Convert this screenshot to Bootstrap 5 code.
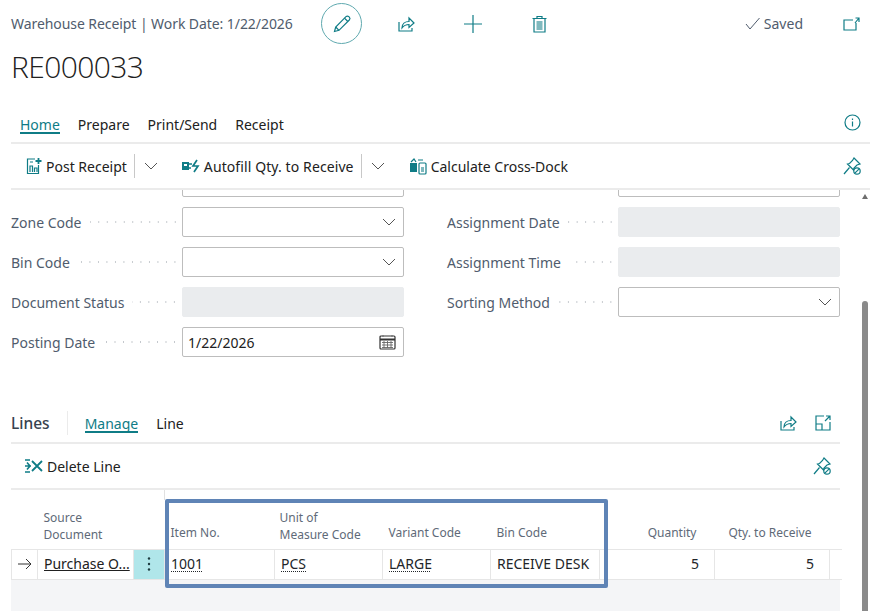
<!DOCTYPE html>
<html lang="en">
<head>
    <meta charset="UTF-8">
    <meta name="viewport" content="width=device-width, initial-scale=1.0">
    <title>Warehouse Receipt RE000033</title>
    <link href="https://cdn.jsdelivr.net/npm/bootstrap@5.3.0/dist/css/bootstrap.min.css" rel="stylesheet">
    <style>
        body { font-family: "Noto Sans", "Open Sans", sans-serif; font-size: 14px; color: #212121; background: #fff; height: 611px; overflow: hidden; }
        svg { display: block; flex: none; fill: none; stroke: #0f7c86; stroke-width: 1.2; }
        .bc-page { width: 870px; padding-left: 11px; }
        .bc-top { height: 47px; }
        .bc-crumb { font-size: 14px; letter-spacing: -0.07px; color: #505c6d; width: 310px; }
        .bc-circle { width: 41px; height: 41px; border: 1px solid #5fa9af; border-radius: 50%; }
        .bc-slot { width: 24px; margin-left: 42px; }
        .bc-slot-first { margin-left: 32px; }
        .bc-slot-plus { margin-left: 43px; }
        .bc-saved { color: #505c6d; }
        .bc-open { margin-left: 40px; margin-right: 10px; }
        .bc-title { font-family: "Open Sans", sans-serif; font-size: 30px; font-weight: 300; line-height: 40px; height: 64px; letter-spacing: -0.6px; color: #212121; }
        .bc-tabs { height: 33px; padding-left: 9px; padding-top: 7px; border-bottom: 2px solid #ebebeb; padding-right: 9px; }
        .bc-tab { margin-right: 18px; border-bottom: 2px solid transparent; line-height: 14px; }
        .bc-tab-on { color: #0f7c86; border-bottom-color: #0f7c86; }
        .bc-info { margin-top: -4px; }
        .bc-bar { height: 46px; border-bottom: 2px solid #ebebeb; padding-left: 15px; padding-right: 8px; }
        .bc-sep { width: 1px; height: 24px; background: #c8c8c8; margin-left: 7px; }
        .bc-chev { stroke: #555; stroke-width: 1; }
        .bc-split { margin-left: 9px; }
        .bc-next { margin-left: 23px; }
        .bc-wide { letter-spacing: 0.1px; }
        .bc-scroll { height: 421px; overflow: hidden; }
        .bc-main { width: 829px; }
        .bc-form { height: 211px; overflow: hidden; }
        .bc-fields { margin-top: -23px; }
        .bc-field { height: 30px; margin-bottom: 10px; }
        .bc-label { width: 171px; color: #505c6d; }
        .bc-dots { height: 4px; margin: 0 3px 0 8px; background-image: radial-gradient(circle, #c4c8cd 0.8px, transparent 1px); background-size: 8.5px 4px; background-position: right center; background-repeat: repeat-x; }
        .bc-input { width: 222px; height: 30px; border: 1px solid #bdbdbd; border-radius: 2px; padding: 0 7px 0 5px; background: #fff; }
        .bc-input-off { background: #eaecee; border-color: #eaecee; }
        .bc-gap { width: 43px; }
        .bc-linesbar { height: 43px; border-bottom: 2px solid #ebebeb; padding-top: 2px; padding-right: 8px; }
        .bc-linesname { font-size: 15.5px; font-weight: 500; line-height: 24px; color: #37424f; padding-right: 17px; border-right: 1px solid #ebebeb; margin-right: 17px; }
        .bc-linestab { margin-top: 4px; }
        .bc-subbar { height: 46px; border-bottom: 2px solid #ebebeb; padding-left: 13px; padding-right: 8px; }
        .bc-gridwrap { position: relative; }
        .bc-stick { width: 1px; height: 10px; background: #e1e1e1; margin-left: 153px; }
        .bc-grid { table-layout: fixed; width: 829px; margin: 0; --bs-table-bg: transparent; }
        .bc-grid th { height: 49px; padding: 0 6px 8px; font-size: 12px; line-height: 17px; font-weight: 400; color: #606a78; vertical-align: bottom; border-bottom: 1px solid #e6e6e6; }
        .bc-grid th.bc-two { padding-bottom: 6px; }
        .bc-grid td { height: 30px; padding: 0 6px; line-height: 28px; vertical-align: middle; border-right: 1px solid #e6e6e6; border-bottom: 1px solid #e6e6e6; white-space: nowrap; overflow: hidden; }
        .bc-grid td:first-child { border-left: 1px solid #e6e6e6; }
        .bc-c1 { width: 26px; }
        .bc-c2 { width: 96px; }
        .bc-c3 { width: 31px; }
        .bc-c4 { width: 110px; }
        .bc-grid th.bc-c5 { width: 108px; padding-left: 5px; }
        .bc-c6 { width: 108px; }
        .bc-c7 { width: 109px; }
        .bc-c8, .bc-c9 { width: 115px; }
        .bc-cend { width: 11px; }
        .bc-grid td.bc-menu { background: #b0e6ea; padding: 0; }
        .bc-grid th.bc-num { text-align: right; padding-right: 18px; }
        .bc-grid td.bc-num { text-align: right; padding-right: 15px; }
        .bc-grid td.bc-nob { border-right: 0; }
        .bc-link { color: #212121; text-decoration: underline; }
        .bc-dash { text-decoration: underline dotted 1px; text-underline-offset: 2px; }
        .bc-rest { height: 40px; background: #f4f5f7; }
        .bc-mark { position: absolute; left: 154px; top: 9px; width: 443px; height: 89px; border: 4px solid #5f84b6; border-radius: 2px; pointer-events: none; }
        .bc-track { width: 41px; padding-left: 22px; }
        .bc-arrow { width: 0; height: 0; border-left: 3.5px solid transparent; border-right: 3.5px solid transparent; border-bottom: 5px solid #6e6e6e; margin-top: 4px; }
        .bc-thumb { width: 6px; height: 320px; background: #8a8a8a; border-radius: 3px 3px 0 0; margin-top: 102px; }
    </style>
</head>
<body>
    <svg width="0" height="0" class="position-absolute">
        <symbol id="i-share" viewBox="0 0 20 20"><path d="M3 8v9h13v-3"/><path d="M6 14c0-4 3-6.500 7-6.500V4l5 5-5 4.500V10.500c-3 0-5 .8-7 3.500z"/></symbol>
        <symbol id="i-pin" viewBox="0 0 20 20"><path d="M12 2l6 6-3 1-3 3-.5 2L5.500 8l2-.5 3-3z"/><path d="M7.500 11.500L2 18"/><circle cx="15" cy="15" r="3.200"/><path d="M12.800 17.200l4.400-4.400"/></symbol>
        <symbol id="i-chev" viewBox="0 0 14 14"><path d="M1 4l6 6 6-6"/></symbol>
    </svg>

    <div class="bc-page">
        <div class="bc-top d-flex align-items-center">
            <div class="bc-crumb text-nowrap">Warehouse Receipt | Work Date: 1/22/2026</div>
            <div class="bc-circle d-flex align-items-center justify-content-center">
                <svg width="20" height="20" viewBox="0 0 20 20"><path d="M2.500 17.500l1.200-4.500L14 2.700c.8-.8 2-.8 2.800 0l.5.5c.8.8.8 2 0 2.800L7 16.300z"/><path d="M12.500 4.200l3.300 3.300M3.700 13l3.300 3.300"/></svg>
            </div>
            <div class="bc-slot bc-slot-first d-flex justify-content-center"><svg width="20" height="20"><use href="#i-share"/></svg></div>
            <div class="bc-slot bc-slot-plus d-flex justify-content-center"><svg width="18" height="18" viewBox="0 0 18 18"><path d="M9 0v18M0 9h18"/></svg></div>
            <div class="bc-slot d-flex justify-content-center"><svg width="15" height="18" viewBox="0 0 15 18"><path d="M.5 3.500h14M5 3.500V1.500h5v2M2 3.500v13.500h11V3.500z"/><rect x="4.500" y="6" width="6" height="9" fill="#7fb9be" stroke="none"/></svg></div>
            <div class="ms-auto d-flex align-items-center bc-saved">
                <svg width="15" height="13" viewBox="0 0 15 13" class="me-1"><path d="M1 7l4 5L14.500 1" stroke="#505c6d" stroke-width="1"/></svg>
                <span>Saved</span>
            </div>
            <div class="d-flex bc-open"><svg width="17" height="14" viewBox="0 0 17 14"><path d="M13 6v7H1V3h9"/><path d="M12 6l4-5M12.500 1H16v4"/></svg></div>
        </div>
        <div class="bc-title">RE000033</div>

        <div class="bc-tabs d-flex align-items-start">
            <span class="bc-tab bc-tab-on">Home</span>
            <span class="bc-tab">Prepare</span>
            <span class="bc-tab">Print/Send</span>
            <span class="bc-tab">Receipt</span>
            <svg width="17" height="17" viewBox="0 0 17 17" class="ms-auto bc-info"><circle cx="8.500" cy="8.500" r="7.500"/><path d="M8.500 7.500v5M8.500 4.500v1.400"/></svg>
        </div>

        <div class="bc-bar d-flex align-items-center">
            <svg width="16" height="18" viewBox="0 0 16 18" class="me-1"><path d="M9 2H1.500v14.500h11V8"/><path d="M12.500 1v6M9.500 4h6" stroke-width="1.800"/><path d="M4 15V9h2.500v6M8.500 15v-4H11v4M4 5h3"/></svg>
            <span>Post Receipt</span>
            <div class="bc-sep"></div>
            <svg width="14" height="14" class="bc-split bc-chev"><use href="#i-chev"/></svg>
            <svg width="19" height="14" viewBox="0 0 19 14" class="bc-next me-1"><rect x="1" y="3" width="7" height="8" fill="#0f7c86" stroke="none"/><rect x="3" y="5" width="3" height="2" fill="#fff" stroke="none"/><path d="M8 5h3M8 9h2" stroke-width="1.500"/><path d="M16 1l-4 6h5l-4 6" stroke-width="1.700"/></svg>
            <span class="bc-wide">Autofill Qty. to Receive</span>
            <div class="bc-sep"></div>
            <svg width="14" height="14" class="bc-split bc-chev"><use href="#i-chev"/></svg>
            <svg width="18" height="18" viewBox="0 0 18 18" class="ms-4 me-1"><rect x="1" y="6" width="7" height="9" fill="#0f7c86" stroke="none"/><path d="M2 5l3-3 2 3M9 3h5"/><rect x="10" y="6" width="7" height="11" rx="1"/><rect x="12" y="10" width="3" height="5" fill="#7fb9be" stroke="none"/></svg>
            <span>Calculate Cross-Dock</span>
            <svg width="20" height="20" class="ms-auto"><use href="#i-pin"/></svg>
        </div>

        <div class="bc-scroll d-flex">
            <div class="bc-main">
                <div class="bc-form">
                    <div class="bc-fields d-flex">
                        <div>
                            <div class="bc-field d-flex align-items-center">
                                <div class="bc-label d-flex align-items-center"></div>
                                <div class="bc-input"></div>
                            </div>
                            <div class="bc-field d-flex align-items-center">
                                <div class="bc-label d-flex align-items-center"><span>Zone Code</span><span class="bc-dots flex-grow-1"></span></div>
                                <div class="bc-input d-flex align-items-center justify-content-end"><svg width="14" height="14" class="bc-chev"><use href="#i-chev"/></svg></div>
                            </div>
                            <div class="bc-field d-flex align-items-center">
                                <div class="bc-label d-flex align-items-center"><span>Bin Code</span><span class="bc-dots flex-grow-1"></span></div>
                                <div class="bc-input d-flex align-items-center justify-content-end"><svg width="14" height="14" class="bc-chev"><use href="#i-chev"/></svg></div>
                            </div>
                            <div class="bc-field d-flex align-items-center">
                                <div class="bc-label d-flex align-items-center"><span>Document Status</span><span class="bc-dots flex-grow-1"></span></div>
                                <div class="bc-input bc-input-off"></div>
                            </div>
                            <div class="bc-field d-flex align-items-center">
                                <div class="bc-label d-flex align-items-center"><span>Posting Date</span><span class="bc-dots flex-grow-1"></span></div>
                                <div class="bc-input d-flex align-items-center justify-content-between">
                                    <span>1/22/2026</span>
                                    <svg width="17" height="16" viewBox="0 0 17 16"><rect x="1" y="2" width="15" height="13" rx="1" stroke="#333"/><path d="M1 5.500h15" stroke="#333" stroke-width="2"/><path d="M4 1v2M13 1v2M3 8.500h11M3 11h11M3 13.500h11M5 7v7M8.500 7v7M12 7v7" stroke="#666" stroke-width=".9"/></svg>
                                </div>
                            </div>
                        </div>
                        <div class="bc-gap"></div>
                        <div>
                            <div class="bc-field d-flex align-items-center">
                                <div class="bc-label"></div>
                                <div class="bc-input"></div>
                            </div>
                            <div class="bc-field d-flex align-items-center">
                                <div class="bc-label d-flex align-items-center"><span>Assignment Date</span><span class="bc-dots flex-grow-1"></span></div>
                                <div class="bc-input bc-input-off"></div>
                            </div>
                            <div class="bc-field d-flex align-items-center">
                                <div class="bc-label d-flex align-items-center"><span>Assignment Time</span><span class="bc-dots flex-grow-1"></span></div>
                                <div class="bc-input bc-input-off"></div>
                            </div>
                            <div class="bc-field d-flex align-items-center">
                                <div class="bc-label d-flex align-items-center"><span>Sorting Method</span><span class="bc-dots flex-grow-1"></span></div>
                                <div class="bc-input d-flex align-items-center justify-content-end"><svg width="14" height="14" class="bc-chev"><use href="#i-chev"/></svg></div>
                            </div>
                        </div>
                    </div>
                </div>

                <div class="bc-linesbar d-flex align-items-center">
                    <span class="bc-linesname">Lines</span>
                    <span class="bc-tab bc-tab-on bc-linestab">Manage</span>
                    <span class="bc-tab bc-linestab">Line</span>
                    <svg width="20" height="20" class="ms-auto"><use href="#i-share"/></svg>
                    <svg width="18" height="18" viewBox="0 0 18 18" class="ms-3"><path d="M10 2H2v14h14V8M2 10h6v6"/><path d="M11 7l5-5M12 2h4v4"/></svg>
                </div>
                <div class="bc-subbar d-flex align-items-center">
                    <svg width="19" height="16" viewBox="0 0 19 16" class="me-1"><path d="M1 2h5M1 8h6M1 14h5M3 4.500l3 3.500-3 3.500" stroke-width="1.600"/><path d="M8 3l10 10M18 3L8 13" stroke-width="1.800"/></svg>
                    <span>Delete Line</span>
                    <svg width="20" height="20" class="ms-auto"><use href="#i-pin"/></svg>
                </div>

                <div class="bc-gridwrap">
                    <div class="bc-stick"></div>
                    <table class="table bc-grid">
                        <thead>
                            <tr>
                                <th class="bc-c1"></th>
                                <th class="bc-c2 bc-two">Source Document</th>
                                <th class="bc-c3"></th>
                                <th class="bc-c4">Item No.</th>
                                <th class="bc-c5 bc-two">Unit of<br>Measure Code</th>
                                <th class="bc-c6">Variant Code</th>
                                <th class="bc-c7">Bin Code</th>
                                <th class="bc-c8 bc-num">Quantity</th>
                                <th class="bc-c9 bc-num">Qty. to Receive</th>
                                <th class="bc-cend"></th>
                            </tr>
                        </thead>
                        <tbody>
                            <tr>
                                <td><svg width="14" height="12" viewBox="0 0 14 12"><path d="M0 6h13M8 1l5 5-5 5" stroke="#333" stroke-width="1"/></svg></td>
                                <td><span class="bc-link">Purchase O...</span></td>
                                <td class="bc-menu"><svg width="4" height="16" viewBox="0 0 4 16" class="mx-auto"><circle cx="2" cy="2.500" r="1.200" fill="#1d3b40" stroke="none"/><circle cx="2" cy="8" r="1.200" fill="#1d3b40" stroke="none"/><circle cx="2" cy="13.500" r="1.200" fill="#1d3b40" stroke="none"/></svg></td>
                                <td><span class="bc-dash">1001</span></td>
                                <td><span class="bc-dash">PCS</span></td>
                                <td><span class="bc-dash">LARGE</span></td>
                                <td>RECEIVE DESK</td>
                                <td class="bc-num">5</td>
                                <td class="bc-num">5</td>
                                <td class="bc-nob"></td>
                            </tr>
                        </tbody>
                    </table>
                    <div class="bc-rest"></div>
                    <div class="bc-mark"></div>
                </div>
            </div>
            <div class="bc-track">
                <div class="bc-arrow"></div>
                <div class="bc-thumb"></div>
            </div>
        </div>
    </div>

    <script src="https://cdn.jsdelivr.net/npm/bootstrap@5.3.0/dist/js/bootstrap.bundle.min.js"></script>
</body>
</html>
